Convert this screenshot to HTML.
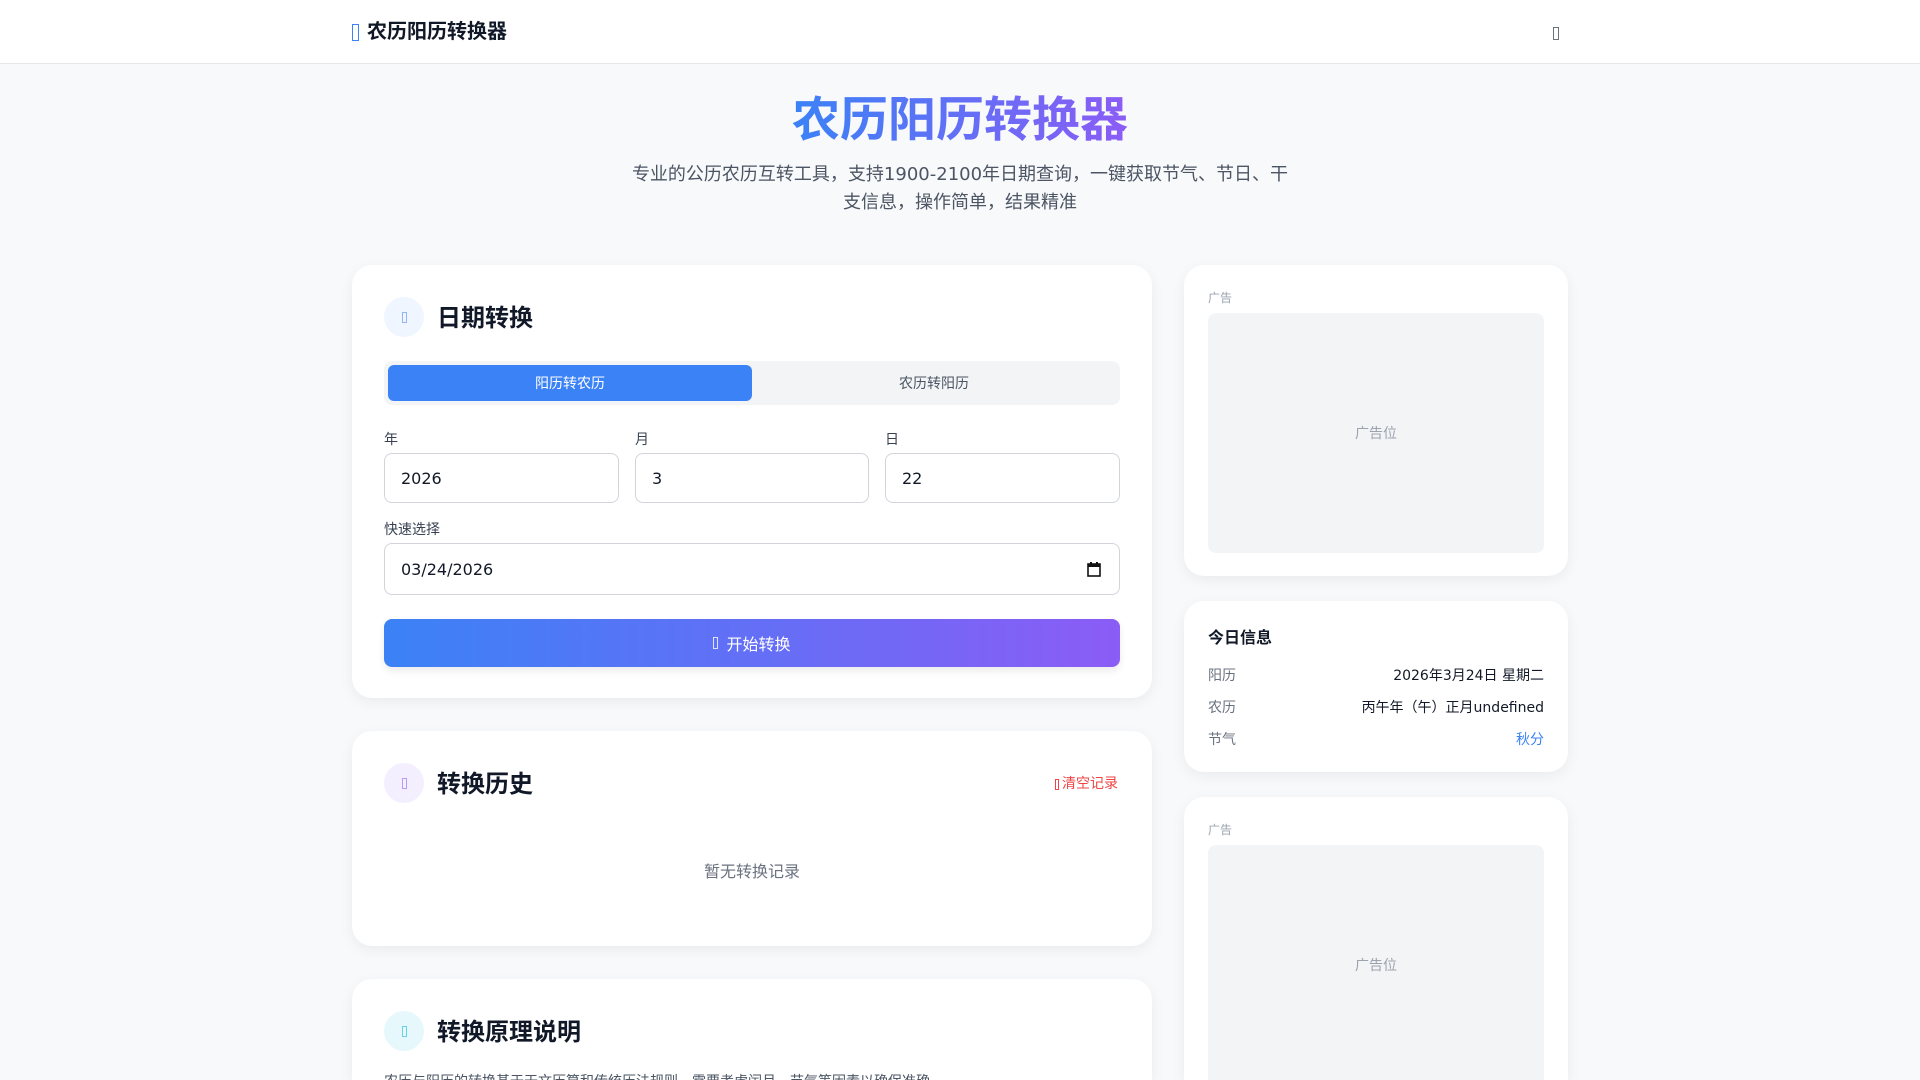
<!DOCTYPE html>
<html style="height:1080px;overflow:hidden"><head><meta charset="utf-8">
<style>
*{box-sizing:border-box;margin:0;padding:0}
body{width:1920px;height:1080px;overflow:hidden;background:#f8f9fb;font-family:"DejaVu Sans","Noto Sans CJK SC",sans-serif;color:#111827;position:relative}
.abs{position:absolute}
.hdr{left:0;top:0;width:1920px;height:64px;background:#fff;border-bottom:1px solid #e5e7eb}
.tofu{display:inline-block;border:1px solid currentColor;width:6px;height:14px;vertical-align:middle}
.card{background:#fff;border-radius:20px;box-shadow:0 4px 14px rgba(0,0,0,0.06)}
.ic{width:40px;height:40px;border-radius:50%;display:flex;align-items:center;justify-content:center}
.ct{font-size:24px;font-weight:bold;font-family:"Noto Sans CJK SC",sans-serif}
.lbl{font-size:14px;color:#374151}
.inp{border:1px solid #d1d5db;border-radius:8px;background:#fff;font-size:16px;padding-left:16px;display:flex;align-items:center;color:#111827}
.adl{font-size:12px;color:#9ca3af}
.adb{background:#f3f4f6;border-radius:8px 8px 0 0;display:flex;align-items:center;justify-content:center;color:#9ca3af;font-size:14px}
.row{left:1208px;width:336px;font-size:14px;display:flex;justify-content:space-between}
.row span:first-child{color:#6b7280}
</style></head><body>
<div class="abs hdr"></div>
<div class="abs" style="left:352px;top:18px;font-size:20px;font-weight:bold;line-height:26px"><span class="tofu" style="color:#3b82f6;width:7px;height:17px;margin-right:8px"></span>农历阳历转换器</div>
<div class="abs" style="left:1553px;top:23px;color:#6b7280"><span class="tofu" style="width:6px;height:13px"></span></div>

<div class="abs" style="left:0;width:1920px;top:88px;text-align:center;font-size:48px;font-weight:bold;line-height:64px"><span style="background:linear-gradient(90deg,#3b82f6,#8b5cf6);-webkit-background-clip:text;background-clip:text;color:transparent">农历阳历转换器</span></div>
<div class="abs" style="left:624px;width:672px;top:161px;text-align:center;font-size:18px;line-height:28px;color:#4b5563">专业的公历农历互转工具，支持1900-2100年日期查询，一键获取节气、节日、干支信息，操作简单，结果精准</div>

<div class="abs card" style="left:352px;top:265px;width:800px;height:433px"></div>
<div class="abs ic" style="left:384px;top:297px;background:#eff6ff;color:#93b4f5"><span class="tofu" style="width:5px;height:11px"></span></div>
<div class="abs ct" style="left:437px;top:298px;line-height:36px">日期转换</div>
<div class="abs" style="left:384px;top:361px;width:736px;height:44px;background:#f3f4f6;border-radius:8px"></div>
<div class="abs" style="left:388px;top:365px;width:364px;height:36px;background:#3b82f6;border-radius:6px;color:#fff;font-size:14px;display:flex;align-items:center;justify-content:center">阳历转农历</div>
<div class="abs" style="left:752px;top:365px;width:364px;height:36px;color:#4b5563;font-size:14px;display:flex;align-items:center;justify-content:center">农历转阳历</div>
<div class="abs lbl" style="left:384px;top:429px">年</div>
<div class="abs lbl" style="left:635px;top:429px">月</div>
<div class="abs lbl" style="left:885px;top:429px">日</div>
<div class="abs inp" style="left:384px;top:453px;width:235px;height:50px">2026</div>
<div class="abs inp" style="left:635px;top:453px;width:234px;height:50px">3</div>
<div class="abs inp" style="left:885px;top:453px;width:235px;height:50px">22</div>
<div class="abs lbl" style="left:384px;top:519px">快速选择</div>
<div class="abs inp" style="left:384px;top:543px;width:736px;height:52px">03/24/2026
<svg style="position:absolute;right:18px;top:17px" width="14" height="16" viewBox="0 0 14 16"><rect x="1" y="3" width="12" height="12" fill="none" stroke="#111" stroke-width="1.6"/><rect x="1" y="3" width="12" height="3" fill="#111"/><rect x="3" y="1" width="2" height="3" fill="#111"/><rect x="9" y="1" width="2" height="3" fill="#111"/></svg></div>
<div class="abs" style="left:384px;top:619px;width:736px;height:48px;border-radius:8px;background:linear-gradient(90deg,#3b82f6,#8b5cf6);color:#fff;font-size:16px;display:flex;align-items:center;justify-content:center;box-shadow:0 4px 8px rgba(0,0,0,0.08)"><span class="tofu" style="width:5px;height:12px;margin-right:8px;opacity:.8"></span>开始转换</div>

<div class="abs card" style="left:352px;top:731px;width:800px;height:215px"></div>
<div class="abs ic" style="left:384px;top:763px;background:#f3efff;color:#b79cf6"><span class="tofu" style="width:5px;height:11px"></span></div>
<div class="abs ct" style="left:437px;top:764px;line-height:36px">转换历史</div>
<div class="abs" style="left:1055px;top:773px;color:#ef4444;font-size:14px"><span class="tofu" style="width:4px;height:11px;margin-right:3px"></span>清空记录</div>
<div class="abs" style="left:352px;width:800px;top:858px;text-align:center;color:#6b7280;font-size:16px">暂无转换记录</div>

<div class="abs card" style="left:352px;top:979px;width:800px;height:101px;border-radius:20px 20px 0 0"></div>
<div class="abs ic" style="left:384px;top:1011px;background:#e6f8fb;color:#67d3e4"><span class="tofu" style="width:5px;height:11px"></span></div>
<div class="abs ct" style="left:437px;top:1012px;line-height:36px">转换原理说明</div>
<div class="abs" style="left:384px;top:1071px;font-size:14px;color:#4b5563;white-space:nowrap;height:9px;overflow:hidden">农历与阳历的转换基于天文历算和传统历法规则，需要考虑闰月、节气等因素以确保准确。</div>

<div class="abs card" style="left:1184px;top:265px;width:384px;height:311px"></div>
<div class="abs adl" style="left:1208px;top:289px">广告</div>
<div class="abs adb" style="left:1208px;top:313px;width:336px;height:240px;border-radius:8px">广告位</div>

<div class="abs card" style="left:1184px;top:601px;width:384px;height:171px"></div>
<div class="abs" style="left:1208px;top:624px;font-size:16px;font-weight:bold">今日信息</div>
<div class="abs row" style="top:665px"><span>阳历</span><span>2026年3月24日 星期二</span></div>
<div class="abs row" style="top:697px"><span>农历</span><span>丙午年（午）正月undefined</span></div>
<div class="abs row" style="top:729px"><span>节气</span><span style="color:#3b82f6">秋分</span></div>

<div class="abs card" style="left:1184px;top:797px;width:384px;height:283px;border-radius:20px 20px 0 0"></div>
<div class="abs adl" style="left:1208px;top:821px">广告</div>
<div class="abs adb" style="left:1208px;top:845px;width:336px;height:235px;align-items:flex-start;padding-top:110px">广告位</div>
</body></html>
